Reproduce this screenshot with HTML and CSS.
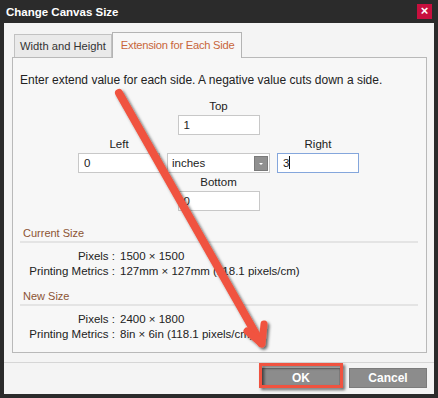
FILE: index.html
```html
<!DOCTYPE html>
<html lang="en">
<head>
    <meta charset="UTF-8">
    <title>Change Canvas Size</title>
    <link rel="stylesheet" href="styles.css">
</head>
<body>
    <div class="dialog">
        <div class="titlebar">
            <span class="title">Change Canvas Size</span>
            <span class="close">&times;</span>
        </div>

        <div class="dialog-body">
            <div class="tabs">
                <div class="tab">Width and Height</div>
                <div class="tab active">Extension for Each Side</div>
            </div>

            <div class="panel">
                <p class="hint">Enter extend value for each side. A negative value cuts down a side.</p>

                <div class="sides">
                    <label class="side-label col-mid">Top</label>
                    <div class="field col-mid">1</div>

                    <label class="side-label col-left">Left</label>
                    <label class="side-label col-right">Right</label>
                    <div class="field col-left">0</div>
                    <div class="select col-mid">
                        <span>inches</span>
                        <span class="select-btn"></span>
                    </div>
                    <div class="field focused col-right">3<span class="caret"></span></div>

                    <label class="side-label col-mid">Bottom</label>
                    <div class="field col-mid">0</div>
                </div>

                <div class="section">
                    <div class="section-title">Current Size</div>
                    <div class="info">
                        <span class="info-label">Pixels :</span><span>1500 &times; 1500</span>
                        <span class="info-label">Printing Metrics :</span><span>127mm &times; 127mm (118.1 pixels/cm)</span>
                    </div>
                </div>

                <div class="section">
                    <div class="section-title">New Size</div>
                    <div class="info">
                        <span class="info-label">Pixels :</span><span>2400 &times; 1800</span>
                        <span class="info-label">Printing Metrics :</span><span>8in &times; 6in (118.1 pixels/cm)</span>
                    </div>
                </div>
            </div>

            <div class="footer">
                <button class="btn">OK</button>
                <button class="btn">Cancel</button>
            </div>
        </div>

        <!-- annotation: arrow + highlight on OK -->
        <svg class="annotation" width="438" height="398" viewBox="0 0 438 398">
            <defs>
                <filter id="shadow" x="-20%" y="-20%" width="140%" height="140%">
                    <feDropShadow dx="2" dy="2" stdDeviation="1.8" flood-color="#000" flood-opacity="0.6"/>
                </filter>
            </defs>
            <g filter="url(#shadow)" fill="none" stroke="#f0533f" stroke-linecap="round" stroke-linejoin="round">
                <line x1="119" y1="93" x2="261" y2="343" stroke-width="8"/>
                <polyline points="247,331 262,344 264,324" stroke-width="7"/>
                <rect x="260.5" y="364.5" width="81" height="22" stroke-width="3" stroke-linecap="butt" stroke-linejoin="miter"/>
            </g>
        </svg>
    </div>
</body>
</html>
```

FILE: styles.css
```css
html, body {
    margin: 0;
    padding: 0;
}

body {
    width: 438px;
    height: 398px;
    background-color: #2b2b2b;
    font-family: "Liberation Sans", Arial, sans-serif;
    font-size: 11px;
    color: #222;
    overflow: hidden;
}

.dialog {
    position: relative;
    width: 438px;
    height: 398px;
}

.titlebar {
    height: 23px;
    display: flex;
    align-items: center;
    justify-content: space-between;
    padding: 0 6px;
}

.title {
    color: #fff;
    font-weight: bold;
    font-size: 11.5px;
}

.close {
    width: 15px;
    height: 15px;
    background-color: #c8103e;
    color: #fff;
    font-weight: bold;
    font-size: 13px;
    line-height: 14px;
    text-align: center;
}

.dialog-body {
    margin: 0 4px;
    height: 371px;
    background-color: #f4f4f4;
    display: flex;
    flex-direction: column;
}

/* tabs */
.tabs {
    display: flex;
    align-items: flex-end;
    padding: 8px 0 0 10px;
    height: 26px;
}

.tab {
    height: 23px;
    line-height: 23px;
    padding: 0 5px;
    border: 1px solid #c2c2c2;
    border-bottom: none;
    background-color: #eaeaea;
    color: #333;
    box-sizing: border-box;
    font-size: 11.2px;
}

.tab.active {
    height: 26px;
    line-height: 24px;
    padding: 0 7px 0 8px;
    background-color: #f7f7f7;
    color: #c8663a;
    border-color: #b4b4b4;
    margin-bottom: -1px;
    letter-spacing: -0.25px;
    position: relative;
}

/* panel */
.panel {
    margin: 0 7px 0 8px;
    height: 296px;
    box-sizing: border-box;
    border: 1px solid #b9b9b9;
    background-color: #f7f7f7;
    padding: 15px 8px 0 7px;
}

.hint {
    margin: 0 0 12px 0;
    line-height: 14px;
    font-size: 12px;
}

.sides {
    display: grid;
    grid-template-columns: 82px 103px 82px;
    column-gap: 7px;
    margin-left: 58px;
    font-size: 11.5px;
}

.col-left { grid-column: 1; }
.col-mid { grid-column: 2; }
.col-right { grid-column: 3; }

.side-label {
    text-align: center;
    line-height: 14px;
    margin-bottom: 2px;
}

.field, .select {
    height: 20px;
    box-sizing: border-box;
    border: 1px solid #c8c8c8;
    background-color: #fff;
    line-height: 18px;
    padding: 0 5px;
    margin-bottom: 2px;
}

.field.col-mid {
    width: 82px;
    justify-self: center;
}

.field.focused {
    border-color: #84a6dc;
}

.caret {
    display: inline-block;
    width: 1px;
    height: 13px;
    background-color: #111;
    vertical-align: -2px;
}

.select {
    display: flex;
    align-items: center;
    justify-content: space-between;
    padding: 0 1px 0 4px;
}

.select-btn {
    width: 14px;
    height: 15px;
    background-color: #909090;
    border: 1px solid #7a7a7a;
    box-sizing: border-box;
    position: relative;
}

.select-btn::after {
    content: "";
    position: absolute;
    left: 4px;
    top: 6px;
    border-left: 2px solid transparent;
    border-right: 2px solid transparent;
    border-top: 2px solid #fff;
}

/* size sections */
.section {
    margin-top: 13px;
}

.section + .section {
    margin-top: 10px;
}

.section-title {
    color: #8c5433;
    line-height: 14px;
    padding: 0 0 1px 3px;
    border-bottom: 2px solid #e4e4e4;
}

.info {
    display: grid;
    grid-template-columns: 95px auto;
    column-gap: 5px;
    padding-top: 6px;
    line-height: 15px;
    font-size: 11.5px;
}

.info-label {
    text-align: right;
}

/* footer */
.footer {
    margin-top: 9px;
    border-top: 1px solid #d6d6d6;
    display: flex;
    justify-content: flex-end;
    gap: 9px;
    padding: 5px 7px 0 0;
}

.btn {
    width: 78px;
    height: 20px;
    background-color: #8c8c8c;
    border: 1px solid #7c7c7c;
    color: #fff;
    font-family: "Liberation Sans", Arial, sans-serif;
    font-weight: bold;
    font-size: 12px;
    padding: 0;
}

.annotation {
    position: absolute;
    left: 0;
    top: 0;
    pointer-events: none;
}
```
